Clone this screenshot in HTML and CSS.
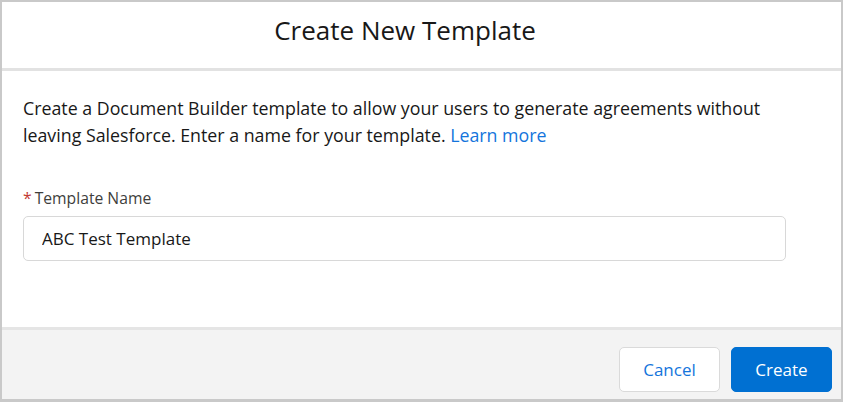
FILE: index.html
```html
<!DOCTYPE html>
<html lang="en">
<head>
    <meta charset="UTF-8">
    <meta name="viewport" content="width=device-width, initial-scale=1.0">
    <title>Create New Template</title>
    <link rel="stylesheet" href="styles.css">
</head>
<body>
    <div class="modal">
        <header class="modal-header">
            <h2>Create New Template</h2>
        </header>

        <div class="modal-body">
            <p class="intro">Create a Document Builder template to allow your users to generate agreements without leaving Salesforce. Enter a name for your template. <a href="#">Learn more</a></p>

            <div class="field">
                <label for="template-name"><abbr class="required" title="required">*</abbr>Template Name</label>
                <input id="template-name" type="text" value="ABC Test Template">
            </div>
        </div>

        <footer class="modal-footer">
            <button class="btn btn-neutral">Cancel</button>
            <button class="btn btn-brand">Create</button>
        </footer>
    </div>
</body>
</html>
```

FILE: styles.css
```css
body {
    margin: 0;
    font-family: "Open Sans", Arial, sans-serif;
    color: #181818;
    background: #fff;
}
.modal {
    width: 843px;
    height: 402px;
    box-sizing: border-box;
    border: 2px solid #c9c9c9;
    border-bottom-width: 3px;
    display: flex;
    flex-direction: column;
}
.modal-header {
    height: 69px;
    box-sizing: border-box;
    padding: 10px 33px 0 0;
    border-bottom: 3px solid #e2e2e2;
    text-align: center;
}
.modal-header h2 {
    margin: 0;
    font-size: 26px;
    line-height: 36px;
    font-weight: 400;
}
.modal-body {
    flex: 1;
    padding: 0 21px;
}
.intro {
    margin: 24px 0 0;
    max-width: 740px;
    font-size: 17.8px;
    line-height: 27px;
}
.intro a {
    color: #1475dc;
    text-decoration: none;
}
.field {
    margin-top: 39px;
    width: 763px;
}
.field label {
    display: block;
    font-size: 15.7px;
    line-height: 21px;
    color: #3e3e3c;
    margin-bottom: 7px;
}
.required {
    color: #c23934;
    text-decoration: none;
    margin-right: 3px;
}
.field input {
    width: 100%;
    box-sizing: border-box;
    height: 45px;
    border: 1px solid #d8d8d8;
    border-radius: 5px;
    padding: 0 18px;
    font-family: inherit;
    font-size: 17px;
    color: #181818;
}
.modal-footer {
    height: 72px;
    box-sizing: border-box;
    background: #f3f3f3;
    border-top: 3px solid #e5e5e5;
    display: flex;
    justify-content: flex-end;
    align-items: flex-start;
    gap: 11px;
    padding: 17px 9px 0;
}
.btn {
    width: 101px;
    height: 45px;
    border-radius: 5px;
    font-family: inherit;
    font-size: 17px;
}
.btn-neutral {
    background: #fff;
    border: 1px solid #dadada;
    color: #1475dc;
}
.btn-brand {
    background: #0070d2;
    border: 1px solid #0070d2;
    color: #fff;
}
```
